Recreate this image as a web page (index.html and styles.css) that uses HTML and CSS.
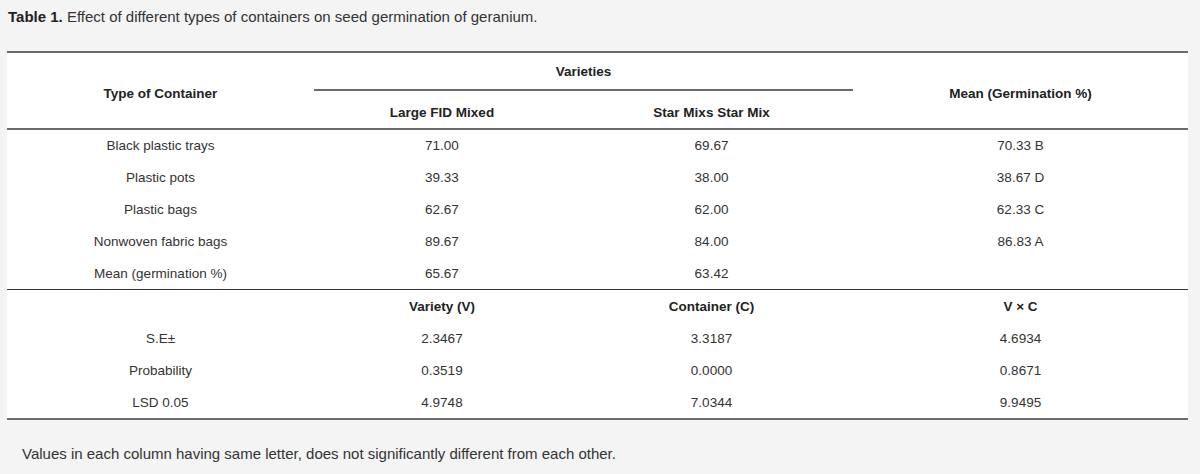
FILE: index.html
```html
<!DOCTYPE html>
<html>
<head>
<meta charset="utf-8">
<link rel="stylesheet" href="styles.css">
</head>
<body>
<p class="title"><b>Table 1.</b> Effect of different types of containers on seed germination of geranium.</p>
<table class="data">
  <colgroup>
    <col class="c1"><col class="c2"><col class="c3"><col class="c4">
  </colgroup>
  <thead>
    <tr class="h1">
      <th rowspan="2" class="span">Type of Container</th>
      <th colspan="2" class="varieties">Varieties</th>
      <th rowspan="2" class="span">Mean (Germination %)</th>
    </tr>
    <tr class="h2">
      <th>Large FID Mixed</th>
      <th>Star Mixs Star Mix</th>
    </tr>
  </thead>
  <tbody class="main">
    <tr><td>Black plastic trays</td><td>71.00</td><td>69.67</td><td>70.33 B</td></tr>
    <tr><td>Plastic pots</td><td>39.33</td><td>38.00</td><td>38.67 D</td></tr>
    <tr><td>Plastic bags</td><td>62.67</td><td>62.00</td><td>62.33 C</td></tr>
    <tr><td>Nonwoven fabric bags</td><td>89.67</td><td>84.00</td><td>86.83 A</td></tr>
    <tr><td>Mean (germination %)</td><td>65.67</td><td>63.42</td><td></td></tr>
  </tbody>
  <tbody class="stats">
    <tr class="first"><td></td><th>Variety (V)</th><th>Container (C)</th><th>V × C</th></tr>
    <tr><td>S.E±</td><td>2.3467</td><td>3.3187</td><td>4.6934</td></tr>
    <tr><td>Probability</td><td>0.3519</td><td>0.0000</td><td>0.8671</td></tr>
    <tr class="last"><td>LSD 0.05</td><td>4.9748</td><td>7.0344</td><td>9.9495</td></tr>
  </tbody>
</table>
<p class="note">Values in each column having same letter, does not significantly different from each other.</p>
</body>
</html>
```

FILE: styles.css
```css
html, body {
  margin: 0;
  padding: 0;
  background: #f4f4f4;
}

body {
  font-family: "Liberation Sans", Arial, sans-serif;
  color: #333;
}

.title {
  margin: 0;
  padding: 8px 8px 0 8px;
  font-size: 15px;
  line-height: 18px;
}

.title b {
  color: #222;
}

.data {
  margin: 25px 0 0 7px;
  width: 1181px;
  border-collapse: separate;
  border-spacing: 0;
  background: #fff;
  border-top: 2px solid #6b6b6b;
  table-layout: fixed;
  font-size: 13.5px;
}

.c1 { width: 307px; }
.c2 { width: 256px; }
.c3 { width: 283px; }
.c4 { width: 335px; }

.data th,
.data td {
  padding: 0;
  text-align: center;
  vertical-align: middle;
  white-space: nowrap;
}

.data th {
  font-weight: bold;
  color: #222;
}

.h1 { height: 38px; }
.h2 { height: 39px; }

.h1 .span {
  padding-top: 5px;
  border-bottom: 2px solid #6b6b6b;
}

.varieties {
  padding-top: 3px;
  border-bottom: 2px solid #6b6b6b;
}

.h2 th {
  padding-top: 5px;
  border-bottom: 2px solid #6b6b6b;
}

.main tr,
.stats tr {
  height: 32px;
}

.main tr:first-child {
  height: 31px;
}

.stats .first {
  height: 33px;
}

.stats .first td,
.stats .first th {
  border-top: 1px solid #333;
}

.stats .last {
  height: 34px;
}

.stats .last td {
  border-bottom: 2px solid #6b6b6b;
}

.note {
  margin: 24px 0 0 0;
  padding-left: 22px;
  font-size: 15px;
  line-height: 20px;
}
```
